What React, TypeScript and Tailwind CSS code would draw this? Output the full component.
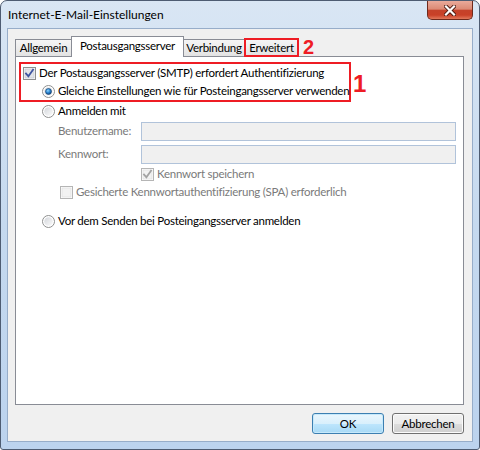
import React from 'react';

// kleine Win7-Bausteine

function CheckBox({ checked = false, disabled = false }: { checked?: boolean; disabled?: boolean }) {
  const rand = disabled ? '#b5b5b5' : '#8e8f8f';
  const haken = disabled ? '#a3a3a3' : '#3f55a0';
  return (
    <svg width="13" height="13" viewBox="0 0 13 13" className="shrink-0">
      <rect x="0.5" y="0.5" width="12" height="12" fill="#ffffff" stroke={rand} />
      <rect x="2" y="2" width="9" height="9" fill={disabled ? '#f2f2f2' : '#e3e5e8'} stroke={disabled ? '#e2e2e2' : '#c4c9d1'} strokeWidth="0.8" />
      {checked && (
        <path d="M3 6.5 L5.4 9.2 L10 2.8" fill="none" stroke={haken} strokeWidth="1.8" strokeLinecap="square" />
      )}
    </svg>
  );
}

function RadioButton({ id, checked = false }: { id: string; checked?: boolean }) {
  return (
    <svg width="13" height="13" viewBox="0 0 13 13" className="shrink-0">
      <defs>
        <linearGradient id={`${id}-bg`} x1="0" y1="0" x2="1" y2="1">
          <stop offset="0" stopColor="#d3d6db" />
          <stop offset="1" stopColor="#fbfbfb" />
        </linearGradient>
        <radialGradient id={`${id}-dot`} cx="0.4" cy="0.35" r="0.7">
          <stop offset="0" stopColor="#8fd6ff" />
          <stop offset="0.5" stopColor="#2b86d1" />
          <stop offset="1" stopColor="#0b3d79" />
        </radialGradient>
      </defs>
      <circle cx="6.5" cy="6.5" r="6" fill="#ffffff" stroke="#8e8f8f" />
      <circle cx="6.5" cy="6.5" r="4.3" fill={`url(#${id}-bg)`} />
      {checked && <circle cx="6.5" cy="6.5" r="3" fill={`url(#${id}-dot)`} stroke="#123f6e" strokeWidth="0.6" />}
    </svg>
  );
}

function Tab({ label, breite }: { label: string; breite: string }) {
  return (
    <div
      className={`${breite} h-[17px] -ml-px first:ml-0 flex items-center justify-center border border-b-0 border-[#898c95] bg-gradient-to-b from-[#f5f5f5] to-[#e3e3e3]`}
    >
      {label}
    </div>
  );
}

export default function App() {
  return (
    <div className="w-[480px] h-[450px] bg-white font-['Lato',sans-serif] text-[12px] text-black leading-none">
      <div className="w-full h-full flex flex-col border border-[#4e5c72] rounded-t-[7px] rounded-b-[3px] bg-gradient-to-b from-[#d9e6f4] via-[#c5d9ef] to-[#bcd3ee]">
        {/* Titelleiste */}
        <div className="h-[27px] flex justify-between shrink-0">
          <div className="self-center pl-[7px] pt-[1px]">Internet-E-Mail-Einstellungen</div>
          <div className="mr-[6px] w-[46px] h-[19px] flex items-center justify-center rounded-b-[5px] border border-t-0 border-[#6e2a1c] bg-[linear-gradient(180deg,#eaaa9a_0%,#dc8a75_45%,#c5422a_52%,#c94027_78%,#e2785b_100%)]">
            <svg width="12" height="11" viewBox="0 0 12 11">
              <path d="M2 1.5 L10 9.5 M10 1.5 L2 9.5" stroke="#4d1a10" strokeWidth="4" strokeLinecap="square" />
              <path d="M2 1.5 L10 9.5 M10 1.5 L2 9.5" stroke="#ffffff" strokeWidth="2.2" strokeLinecap="square" />
            </svg>
          </div>
        </div>

        {/* Client-Bereich */}
        <div className="flex-1 mx-[6px] mb-[7px] border border-[#97adc9] bg-[#f0f0f0] pl-[7px] pr-[8px] pt-[7px] flex flex-col text-[11.5px] tracking-[-0.25px]">
          {/* Registerkarten */}
          <div className="h-[20px] flex items-end shrink-0">
            <Tab label="Allgemein" breite="w-[57px]" />
            <div className="relative z-10 -ml-px -mb-px w-[113px] h-[21px] pb-[2px] flex items-center justify-center border border-b-0 border-[#898c95] bg-white">
              Postausgangsserver
            </div>
            <Tab label="Verbindung" breite="w-[62px]" />
            <div className="relative z-10 -ml-px -mb-px w-[55px] h-[19px] flex items-center justify-center border-2 border-[#ee1c24] bg-gradient-to-b from-[#f5f5f5] to-[#e3e3e3]">
              Erweitert
            </div>
            <div className="self-center ml-[4px] pt-[2px] font-['Liberation_Sans',sans-serif] font-bold text-[20px] tracking-normal text-[#ee1c24]">2</div>
          </div>

          {/* Registerinhalt */}
          <div className="h-[349px] shrink-0 border border-[#898c95] bg-white flex flex-col whitespace-nowrap">
            <div className="mt-[5px] ml-[3px] flex items-center">
              <div className="w-[332px] border-2 border-[#ee1c24] flex flex-col">
                <div className="h-[18px] pl-[2px] flex items-center gap-[3px]">
                  <CheckBox checked />
                  <span>Der Postausgangsserver (SMTP) erfordert Authentifizierung</span>
                </div>
                <div className="h-[18px] pl-[21px] flex items-center gap-[3px]">
                  <RadioButton id="r1" checked />
                  <span>Gleiche Einstellungen wie für Posteingangsserver verwenden</span>
                </div>
              </div>
              <div className="ml-[2px] mt-[4px] font-['Liberation_Sans',sans-serif] font-bold text-[24px] tracking-normal text-[#ee1c24]">1</div>
            </div>

            <div className="h-[18px] ml-[26px] flex items-center gap-[3px]">
              <RadioButton id="r2" />
              <span>Anmelden mit</span>
            </div>

            <div className="mt-[1px] h-[20px] ml-[42px] mr-[7px] flex items-center text-[#7a7a7a]">
              <span className="w-[83px]">Benutzername:</span>
              <div className="flex-1 h-[19px] border border-[#b1c3da] bg-[#f0f0f0]" />
            </div>
            <div className="mt-[3px] h-[20px] ml-[42px] mr-[7px] flex items-center text-[#7a7a7a]">
              <span className="w-[83px]">Kennwort:</span>
              <div className="flex-1 h-[19px] border border-[#b1c3da] bg-[#f0f0f0]" />
            </div>

            <div className="mt-[1px] h-[18px] ml-[125px] flex items-center gap-[3px] text-[#7a7a7a]">
              <CheckBox checked disabled />
              <span>Kennwort speichern</span>
            </div>
            <div className="h-[18px] ml-[44px] flex items-center gap-[3px] text-[#7a7a7a]">
              <CheckBox disabled />
              <span>Gesicherte Kennwortauthentifizierung (SPA) erforderlich</span>
            </div>

            <div className="mt-[11px] h-[18px] ml-[26px] flex items-center gap-[3px]">
              <RadioButton id="r3" />
              <span>Vor dem Senden bei Posteingangsserver anmelden</span>
            </div>
          </div>

          {/* Schaltflächen */}
          <div className="mt-[8px] flex justify-end gap-[8px]">
            <button className="w-[72px] h-[21px] rounded-[3px] border border-[#3c7fb1] bg-[linear-gradient(180deg,#eaf6fd_0%,#d9f0fc_50%,#bee6fd_51%,#a7d9f5_100%)] shadow-[inset_0_0_0_1px_#c6e9fb] text-black">
              OK
            </button>
            <button className="w-[72px] h-[21px] rounded-[3px] border border-[#707070] bg-[linear-gradient(180deg,#f2f2f2_0%,#ebebeb_50%,#dddddd_51%,#cfcfcf_100%)] shadow-[inset_0_0_0_1px_#fbfbfb] text-black">
              Abbrechen
            </button>
          </div>
        </div>
      </div>
    </div>
  );
}
